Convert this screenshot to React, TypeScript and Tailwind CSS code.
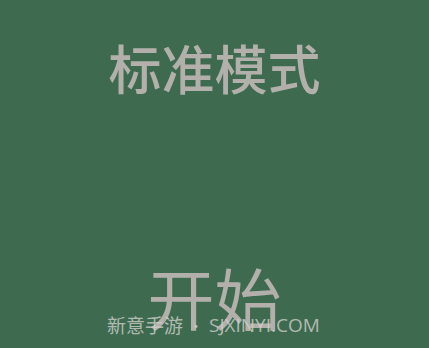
export default function App() {
  return (
    <div
      className="relative h-[348px] w-[429px] overflow-hidden bg-[#3e6b50] flex flex-col items-center"
      style={{ fontFamily: '"Noto Sans CJK SC", "Noto Sans", sans-serif' }}
    >
      <h1 className="mt-[29px] text-[53px] leading-[76px] font-medium text-[#b3b0ab]">
        标准模式
      </h1>

      <div className="mt-auto mb-[12px] text-[67px] leading-[80px] text-[#b3b0ab]">开始</div>

      {/* watermark */}
      <div className="absolute left-[107px] top-[313px] flex items-center text-[19px] leading-[24px] text-[#d0d0cc]/80">
        <span>新意手游</span>
        <span className="mx-[6px] text-[14px]">•</span>
        <span style={{ fontFamily: '"Open Sans", sans-serif' }}>SJXINYI.COM</span>
      </div>
    </div>
  )
}
